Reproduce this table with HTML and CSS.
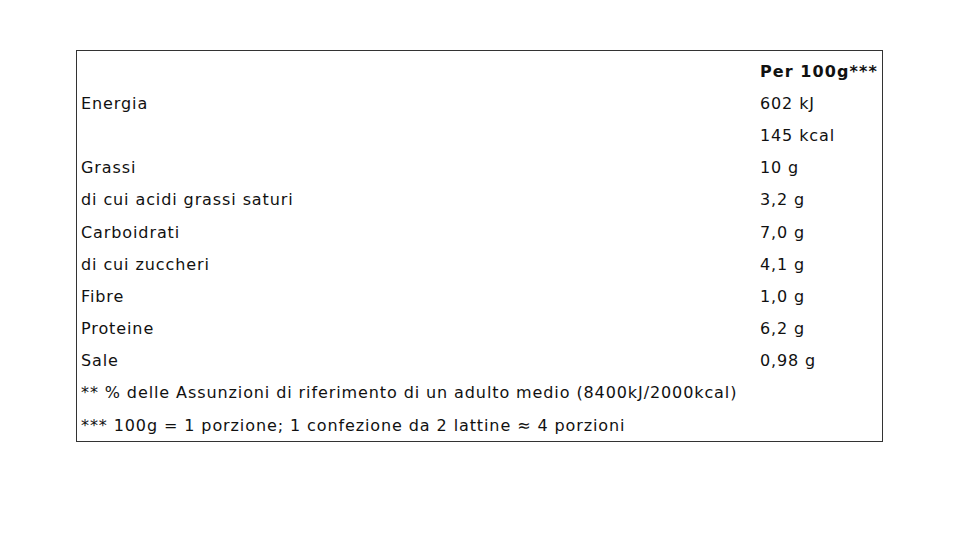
FILE: index.html
```html
<!DOCTYPE html>
<html lang="it">
<head>
  <meta charset="UTF-8">
  <title>Valori nutrizionali</title>
  <link rel="stylesheet" href="styles.css">
</head>
<body>
<div class="page">
  <table class="nutri">
    <tr><td></td><td class="val head">Per 100g***</td></tr>
    <tr><td>Energia</td><td class="val">602 kJ</td></tr>
    <tr><td></td><td class="val">145 kcal</td></tr>
    <tr><td>Grassi</td><td class="val">10 g</td></tr>
    <tr><td>di cui acidi grassi saturi</td><td class="val">3,2 g</td></tr>
    <tr><td>Carboidrati</td><td class="val">7,0 g</td></tr>
    <tr><td>di cui zuccheri</td><td class="val">4,1 g</td></tr>
    <tr><td>Fibre</td><td class="val">1,0 g</td></tr>
    <tr><td>Proteine</td><td class="val">6,2 g</td></tr>
    <tr><td>Sale</td><td class="val">0,98 g</td></tr>
    <tr><td colspan="2">** % delle Assunzioni di riferimento di un adulto medio (8400kJ/2000kcal)</td></tr>
    <tr><td colspan="2">*** 100g = 1 porzione; 1 confezione da 2 lattine ≈ 4 porzioni</td></tr>
  </table>
</div>
</body>
</html>
```

FILE: styles.css
```css
html, body {
    margin: 0;
    padding: 0;
    background: #fff;
}

.page {
    padding: 50px 0 0 76px;
}

.nutri {
    width: 807px;
    border: 1px solid #333;
    box-shadow: 0 1px 0 #999;
    border-collapse: separate;
    border-spacing: 0;
    padding: 4px 0 0;
    font-family: "DejaVu Sans", sans-serif;
    font-size: 16px;
    letter-spacing: 0.9px;
    color: #111;
}

.nutri td {
    height: 32.2px;
    padding: 0 4px;
    vertical-align: middle;
    white-space: nowrap;
}

.nutri td.val {
    width: 118px;
}

.head {
    font-weight: bold;
    letter-spacing: 1.1px;
}
```
